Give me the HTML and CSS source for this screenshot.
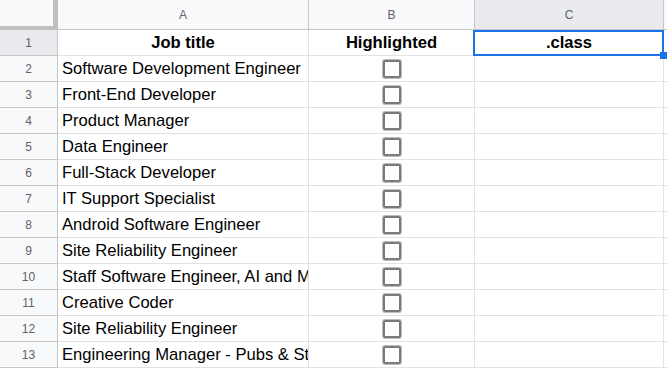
FILE: index.html
```html
<!DOCTYPE html>
<html><head><title>Sheet</title>
<link rel="stylesheet" href="styles.css">
</head>
<body>
<div class="sheet">
  <div class="corner"></div>
  <div class="colhead">A</div>
  <div class="colhead">B</div>
  <div class="colhead active">C</div>
  <div class="colhead rest"></div>

  <div class="rownum active">1</div>
  <div class="cell head">Job title</div>
  <div class="cell head">Highlighted</div>
  <div class="cell head selected">.class<span class="sel-box"><span class="handle"></span></span></div>
  <div class="cell rest"></div>

  <div class="rownum">2</div>
  <div class="cell">Software Development Engineer</div>
  <div class="cell check"><span class="box"></span></div>
  <div class="cell"></div>
  <div class="cell rest"></div>

  <div class="rownum">3</div>
  <div class="cell">Front-End Developer</div>
  <div class="cell check"><span class="box"></span></div>
  <div class="cell"></div>
  <div class="cell rest"></div>

  <div class="rownum">4</div>
  <div class="cell">Product Manager</div>
  <div class="cell check"><span class="box"></span></div>
  <div class="cell"></div>
  <div class="cell rest"></div>

  <div class="rownum">5</div>
  <div class="cell">Data Engineer</div>
  <div class="cell check"><span class="box"></span></div>
  <div class="cell"></div>
  <div class="cell rest"></div>

  <div class="rownum">6</div>
  <div class="cell">Full-Stack Developer</div>
  <div class="cell check"><span class="box"></span></div>
  <div class="cell"></div>
  <div class="cell rest"></div>

  <div class="rownum">7</div>
  <div class="cell">IT Support Specialist</div>
  <div class="cell check"><span class="box"></span></div>
  <div class="cell"></div>
  <div class="cell rest"></div>

  <div class="rownum">8</div>
  <div class="cell">Android Software Engineer</div>
  <div class="cell check"><span class="box"></span></div>
  <div class="cell"></div>
  <div class="cell rest"></div>

  <div class="rownum">9</div>
  <div class="cell">Site Reliability Engineer</div>
  <div class="cell check"><span class="box"></span></div>
  <div class="cell"></div>
  <div class="cell rest"></div>

  <div class="rownum">10</div>
  <div class="cell">Staff Software Engineer, AI and M</div>
  <div class="cell check"><span class="box"></span></div>
  <div class="cell"></div>
  <div class="cell rest"></div>

  <div class="rownum">11</div>
  <div class="cell">Creative Coder</div>
  <div class="cell check"><span class="box"></span></div>
  <div class="cell"></div>
  <div class="cell rest"></div>

  <div class="rownum">12</div>
  <div class="cell">Site Reliability Engineer</div>
  <div class="cell check"><span class="box"></span></div>
  <div class="cell"></div>
  <div class="cell rest"></div>

  <div class="rownum">13</div>
  <div class="cell">Engineering Manager - Pubs &amp; St</div>
  <div class="cell check"><span class="box"></span></div>
  <div class="cell"></div>
  <div class="cell rest"></div>
</div>
</body>
</html>
```

FILE: styles.css
```css
body {
    margin: 0;
    background: #fff;
    font-family: "Liberation Sans", Arial, sans-serif;
    overflow: hidden;
}

.sheet {
    display: grid;
    grid-template-columns: 58px 251px 166px 189px 1fr;
    grid-template-rows: 30px;
    grid-auto-rows: 26px;
}

.corner {
    background: #f8f9fa;
    border-right: 5px solid #c0c0c0;
    border-bottom: 4px solid #c0c0c0;
}

.colhead {
    background: #f8f9fa;
    border-right: 1px solid #c4c7c5;
    border-bottom: 1px solid #c4c7c5;
    color: #5f6368;
    font-size: 12px;
    display: flex;
    align-items: center;
    justify-content: center;
    padding-top: 1px;
}
.colhead.active {
    background: #e8eaed;
}
.colhead.rest {
    border-right: none;
}

.rownum {
    background: #f8f9fa;
    border-right: 1px solid #c4c7c5;
    border-bottom: 1px solid #c4c7c5;
    color: #5f6368;
    font-size: 12px;
    display: flex;
    align-items: center;
    justify-content: center;
}
.rownum.active {
    background: #e8eaed;
}

.cell {
    position: relative;
    border-right: 1px solid #e2e2e2;
    border-bottom: 1px solid #e2e2e2;
    font-size: 16.6px;
    line-height: 24px;
    padding: 1px 4px 0;
    color: #000;
    white-space: nowrap;
    overflow: hidden;
}
.cell.head {
    font-weight: bold;
    text-align: center;
}
.cell.selected {
    overflow: visible;
}
.cell.rest {
    border-right: none;
}

.sel-box {
    position: absolute;
    left: -2px;
    right: -1px;
    top: 0;
    bottom: -1px;
    border: 2px solid #1a73e8;
    z-index: 2;
}
.handle {
    position: absolute;
    right: -5px;
    bottom: -5px;
    width: 7px;
    height: 7px;
    background: #1a73e8;
}

.check {
    display: flex;
    align-items: center;
    justify-content: center;
    padding: 0;
}
.box {
    width: 18px;
    height: 18px;
    box-sizing: border-box;
    border: 2px solid #7a7a7a;
    border-radius: 2px;
    box-shadow: 0 0 0 1px #bdbdbd;
    margin-left: 1px;
}
```
